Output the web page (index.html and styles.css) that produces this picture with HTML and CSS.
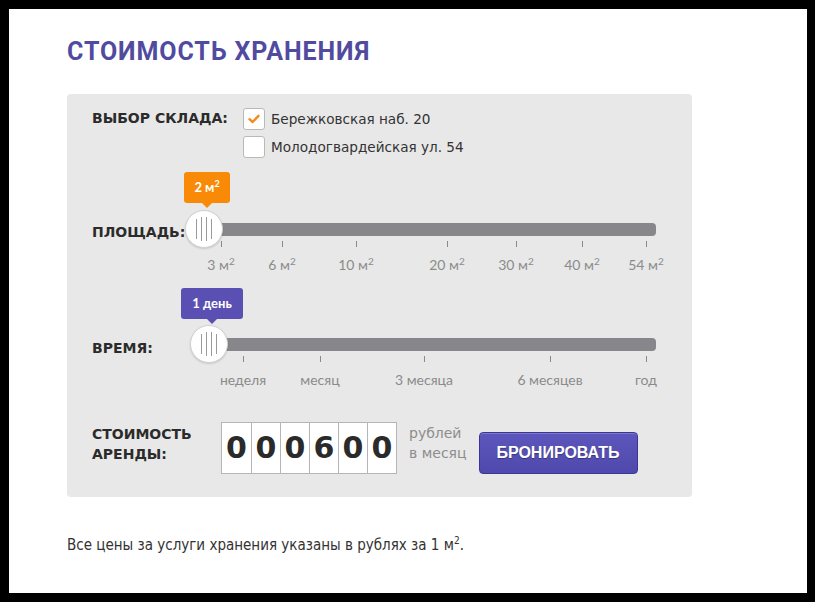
FILE: index.html
```html
<!DOCTYPE html>
<html lang="ru">
<head>
<meta charset="utf-8">
<title>Стоимость хранения</title>
<link rel="stylesheet" href="styles.css">
</head>
<body>
<div class="page">
  <h1 class="title">СТОИМОСТЬ ХРАНЕНИЯ</h1>

  <div class="calc">
    <div class="row row-stock">
      <div class="label">ВЫБОР СКЛАДА:</div>
      <div class="stocks">
        <label class="stock">
          <span class="check checked">
            <svg width="12" height="10" viewBox="0 0 12 10"><path d="M1.5 5.2 L4.6 8 L10.5 1.8" fill="none" stroke="#f58a1f" stroke-width="2.4" stroke-linecap="round" stroke-linejoin="round"/></svg>
          </span>
          <span class="stock-name">Бережковская наб. 20</span>
        </label>
        <label class="stock">
          <span class="check"></span>
          <span class="stock-name">Молодогвардейская ул. 54</span>
        </label>
      </div>
    </div>

    <div class="row row-slider row-area">
      <div class="label">ПЛОЩАДЬ:</div>
      <div class="slider slider-area">
        <div class="track"></div>
        <div class="tip tip-orange">2 м<sup>2</sup></div>
        <div class="thumb"><i></i><i></i><i></i><i></i></div>
        <div class="tick" style="left:17px"><span>3 м<sup>2</sup></span></div>
        <div class="tick" style="left:78px"><span>6 м<sup>2</sup></span></div>
        <div class="tick" style="left:152px"><span>10 м<sup>2</sup></span></div>
        <div class="tick" style="left:243px"><span>20 м<sup>2</sup></span></div>
        <div class="tick" style="left:312px"><span>30 м<sup>2</sup></span></div>
        <div class="tick" style="left:378px"><span>40 м<sup>2</sup></span></div>
        <div class="tick" style="left:442px"><span>54 м<sup>2</sup></span></div>
      </div>
    </div>

    <div class="row row-slider row-time">
      <div class="label">ВРЕМЯ:</div>
      <div class="slider slider-time">
        <div class="track"></div>
        <div class="tip tip-purple">1 день</div>
        <div class="thumb"><i></i><i></i><i></i><i></i></div>
        <div class="tick" style="left:34px"><span>неделя</span></div>
        <div class="tick" style="left:111px"><span>месяц</span></div>
        <div class="tick" style="left:215px"><span>3 месяца</span></div>
        <div class="tick" style="left:341px"><span>6 месяцев</span></div>
        <div class="tick" style="left:437px"><span>год</span></div>
      </div>
    </div>

    <div class="row row-cost">
      <div class="label">СТОИМОСТЬ<br>АРЕНДЫ:</div>
      <div class="digits">
        <span>0</span><span>0</span><span>0</span><span>6</span><span>0</span><span>0</span>
      </div>
      <div class="unit">рублей<br>в месяц</div>
      <button class="book">БРОНИРОВАТЬ</button>
    </div>
  </div>

  <p class="note">Все цены за услуги хранения указаны в рублях за 1 м<sup>2</sup>.</p>
</div>
</body>
</html>
```

FILE: styles.css
```css
html, body {
  margin: 0;
  padding: 0;
  background: #000;
}

.page {
  margin: 9px 8px 0 9px;
  height: 584px;
  background: #fff;
  padding: 0 0 0 58px;
  box-sizing: border-box;
  overflow: hidden;
}

.title {
  margin: 0;
  padding-top: 28px;
  height: 56px;
  box-sizing: border-box;
  font-family: "Roboto", sans-serif;
  font-weight: 700;
  font-size: 25px;
  line-height: 30px;
  color: #514b9f;
  letter-spacing: 0.9px;
}

.calc {
  margin-top: 29px;
  width: 625px;
  height: 403px;
  box-sizing: border-box;
  background: #e8e8e8;
  border-radius: 4px;
  padding: 14px 0 0 25px;
}

.row {
  display: flex;
}

.label {
  font-family: "DejaVu Sans", sans-serif;
  font-weight: 700;
  font-size: 14px;
  color: #2b2b2b;
  line-height: 20px;
}

/* warehouse choice */
.row-stock .label {
  width: 151px;
  flex: none;
  padding-top: 0;
}

.stocks {
  display: flex;
  flex-direction: column;
  gap: 6px;
}

.stock {
  display: flex;
  align-items: center;
  gap: 6px;
  height: 22px;
}

.check {
  width: 20px;
  height: 20px;
  border: 1px solid #b9b9b9;
  border-radius: 3px;
  background: #fff;
  display: flex;
  align-items: center;
  justify-content: center;
}

.stock-name {
  font-family: "DejaVu Sans", sans-serif;
  font-size: 13.6px;
  color: #333;
}

/* sliders */
.row-slider {
  align-items: flex-start;
}

.row-slider .label {
  flex: none;
}

.row-area {
  margin-top: 14px;
  height: 116px;
}

.row-area .label {
  width: 112px;
  padding-top: 50px;
}

.row-time {
  height: 134px;
}

.row-time .label {
  width: 117px;
  padding-top: 50px;
}

.slider {
  position: relative;
  height: 110px;
}

.slider-area {
  width: 452px;
}

.slider-time {
  width: 447px;
}

.track {
  position: absolute;
  left: 0;
  right: 0;
  top: 51px;
  height: 13px;
  background: #87878b;
  border-radius: 0 4px 4px 0;
}

.thumb {
  position: absolute;
  left: -19px;
  top: 38px;
  width: 36px;
  height: 36px;
  border: 1px solid #d2d2d2;
  border-radius: 50%;
  background: #fff;
  box-shadow: 0 1px 2px rgba(0, 0, 0, 0.15);
  display: flex;
  align-items: center;
  justify-content: center;
  gap: 4px;
}

.thumb i {
  display: block;
  width: 1px;
  height: 20px;
  background: #9a9a9a;
}

.thumb i:nth-child(2),
.thumb i:nth-child(3) {
  height: 24px;
}

.tip {
  position: absolute;
  top: 0;
  height: 31px;
  box-sizing: border-box;
  border-radius: 3px;
  color: #fff;
  font-family: "Lato", sans-serif;
  font-weight: 700;
  font-size: 13px;
  line-height: 31px;
  white-space: nowrap;
  text-align: center;
  padding: 0;
}

.tip::after {
  content: "";
  position: absolute;
  left: 50%;
  bottom: -5px;
  margin-left: -5px;
  border-left: 5px solid transparent;
  border-right: 5px solid transparent;
  border-top: 5px solid transparent;
}

.tip sup {
  font-size: 9px;
  vertical-align: 0;
  position: relative;
  top: -5px;
}

.tip-orange {
  left: -20px;
  width: 46px;
  background: #f98a07;
}

.tip-orange::after {
  border-top-color: #f98a07;
}

.tip-purple {
  left: -28px;
  width: 62px;
  background: #5a50b3;
}

.tip-purple::after {
  border-top-color: #5a50b3;
}

.slider-time .track {
  top: 50px;
}

.slider-time .thumb {
  top: 37px;
}

.tick {
  position: absolute;
  top: 69px;
  width: 1px;
  height: 6px;
  background: #8a8a8a;
}

.tick span {
  position: absolute;
  top: 15px;
  left: 0;
  transform: translateX(-50%);
  white-space: nowrap;
  font-family: "Lato", sans-serif;
  font-size: 14px;
  color: #8b8b8b;
  line-height: 18px;
}

.tick sup {
  font-size: 10px;
  vertical-align: 0;
  position: relative;
  top: -5px;
}

.slider-time .tick {
  top: 68px;
}

/* cost */
.row-cost {
  align-items: flex-start;
}

.row-cost .label {
  width: 129px;
  flex: none;
  padding-top: 2px;
}

.digits {
  display: flex;
  border: 1px solid #b5b5b5;
  background: #fff;
  height: 50px;
}

.digits span {
  width: 28px;
  height: 50px;
  border-left: 1px solid #b5b5b5;
  text-align: center;
  font-family: "DejaVu Sans", sans-serif;
  font-weight: 700;
  font-size: 30px;
  line-height: 50px;
  color: #2a2a2a;
}

.digits span:first-child {
  border-left: 0;
  width: 29px;
}

.unit {
  margin-left: 12px;
  font-family: "DejaVu Sans", sans-serif;
  font-size: 14px;
  color: #8d8d8d;
  line-height: 20px;
  padding-top: 1px;
}

.book {
  margin: 10px 0 0 12px;
  width: 159px;
  height: 42px;
  border: 1px solid #3b3595;
  border-radius: 4px;
  background: linear-gradient(#5d57bd, #4f49ad);
  box-shadow: inset 0 1px 0 rgba(255, 255, 255, 0.2);
  color: #fff;
  font-family: "Liberation Sans", Arial, sans-serif;
  font-weight: 700;
  font-size: 16px;
  text-shadow: 0 1px 1px rgba(0, 0, 0, 0.35);
  padding: 0;
  cursor: pointer;
}

.note {
  margin: 38px 0 0;
  font-family: "DejaVu Sans", sans-serif;
  font-stretch: condensed;
  font-size: 15px;
  color: #333;
  line-height: 20px;
}

.note sup {
  font-size: 10px;
  vertical-align: 0;
  position: relative;
  top: -6px;
}
```
